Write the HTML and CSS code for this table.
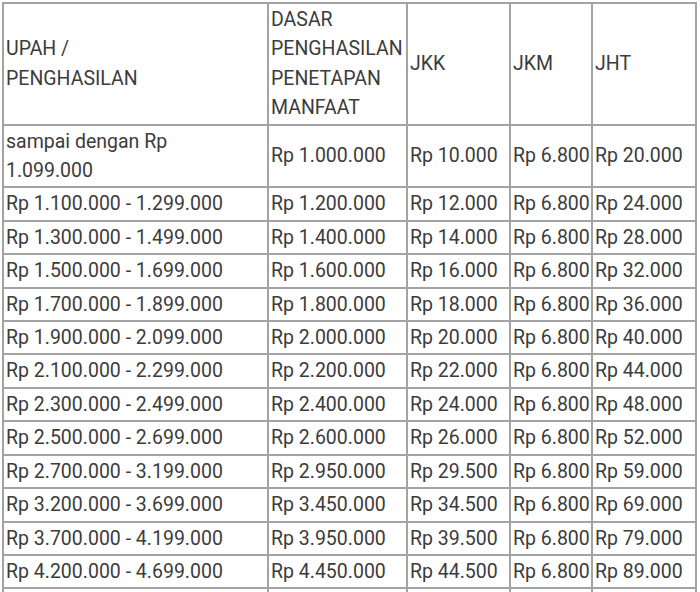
FILE: index.html
```html
<!DOCTYPE html>
<html lang="id">
<head>
<meta charset="utf-8">
<title>Tabel Iuran</title>
<link rel="stylesheet" href="styles.css">
</head>
<body>
<table class="iuran">
  <colgroup>
    <col class="c-upah">
    <col class="c-dasar">
    <col class="c-jkk">
    <col class="c-jkm">
    <col class="c-jht">
  </colgroup>
  <thead>
    <tr>
      <th>UPAH /<br>PENGHASILAN</th>
      <th>DASAR PENGHASILAN PENETAPAN MANFAAT</th>
      <th>JKK</th>
      <th>JKM</th>
      <th>JHT</th>
    </tr>
  </thead>
  <tbody>
    <tr><td>sampai dengan Rp<br>1.099.000</td><td>Rp 1.000.000</td><td>Rp 10.000</td><td>Rp 6.800</td><td>Rp 20.000</td></tr>
    <tr><td>Rp 1.100.000 - 1.299.000</td><td>Rp 1.200.000</td><td>Rp 12.000</td><td>Rp 6.800</td><td>Rp 24.000</td></tr>
    <tr><td>Rp 1.300.000 - 1.499.000</td><td>Rp 1.400.000</td><td>Rp 14.000</td><td>Rp 6.800</td><td>Rp 28.000</td></tr>
    <tr><td>Rp 1.500.000 - 1.699.000</td><td>Rp 1.600.000</td><td>Rp 16.000</td><td>Rp 6.800</td><td>Rp 32.000</td></tr>
    <tr><td>Rp 1.700.000 - 1.899.000</td><td>Rp 1.800.000</td><td>Rp 18.000</td><td>Rp 6.800</td><td>Rp 36.000</td></tr>
    <tr><td>Rp 1.900.000 - 2.099.000</td><td>Rp 2.000.000</td><td>Rp 20.000</td><td>Rp 6.800</td><td>Rp 40.000</td></tr>
    <tr><td>Rp 2.100.000 - 2.299.000</td><td>Rp 2.200.000</td><td>Rp 22.000</td><td>Rp 6.800</td><td>Rp 44.000</td></tr>
    <tr><td>Rp 2.300.000 - 2.499.000</td><td>Rp 2.400.000</td><td>Rp 24.000</td><td>Rp 6.800</td><td>Rp 48.000</td></tr>
    <tr><td>Rp 2.500.000 - 2.699.000</td><td>Rp 2.600.000</td><td>Rp 26.000</td><td>Rp 6.800</td><td>Rp 52.000</td></tr>
    <tr><td>Rp 2.700.000 - 3.199.000</td><td>Rp 2.950.000</td><td>Rp 29.500</td><td>Rp 6.800</td><td>Rp 59.000</td></tr>
    <tr><td>Rp 3.200.000 - 3.699.000</td><td>Rp 3.450.000</td><td>Rp 34.500</td><td>Rp 6.800</td><td>Rp 69.000</td></tr>
    <tr><td>Rp 3.700.000 - 4.199.000</td><td>Rp 3.950.000</td><td>Rp 39.500</td><td>Rp 6.800</td><td>Rp 79.000</td></tr>
    <tr><td>Rp 4.200.000 - 4.699.000</td><td>Rp 4.450.000</td><td>Rp 44.500</td><td>Rp 6.800</td><td>Rp 89.000</td></tr>
    <tr class="empty"><td></td><td></td><td></td><td></td><td></td></tr>
  </tbody>
</table>
</body>
</html>
```

FILE: styles.css
```css
html, body {
  margin: 0;
  padding: 0;
  background: #ffffff;
}

body {
  font-family: Roboto, "Liberation Sans", Arial, sans-serif;
  color: #3c3c3c;
  font-size: 19.5px;
  line-height: 29.4px;
  padding: 2px 0 0 2px;
}

.iuran {
  border-collapse: collapse;
  table-layout: fixed;
  width: 693px;
}

.c-upah { width: 265px; }
.c-dasar { width: 139px; }
.c-jkk { width: 103px; }
.c-jkm { width: 82px; }
.c-jht { width: 104px; }

.iuran th,
.iuran td {
  border: 2px solid #a3a3a3;
  padding: 1px 1px 1px 2px;
  text-align: left;
  vertical-align: middle;
  font-weight: 400;
}

.iuran td {
  white-space: nowrap;
}

.iuran .empty td {
  height: 29.4px;
}
```
